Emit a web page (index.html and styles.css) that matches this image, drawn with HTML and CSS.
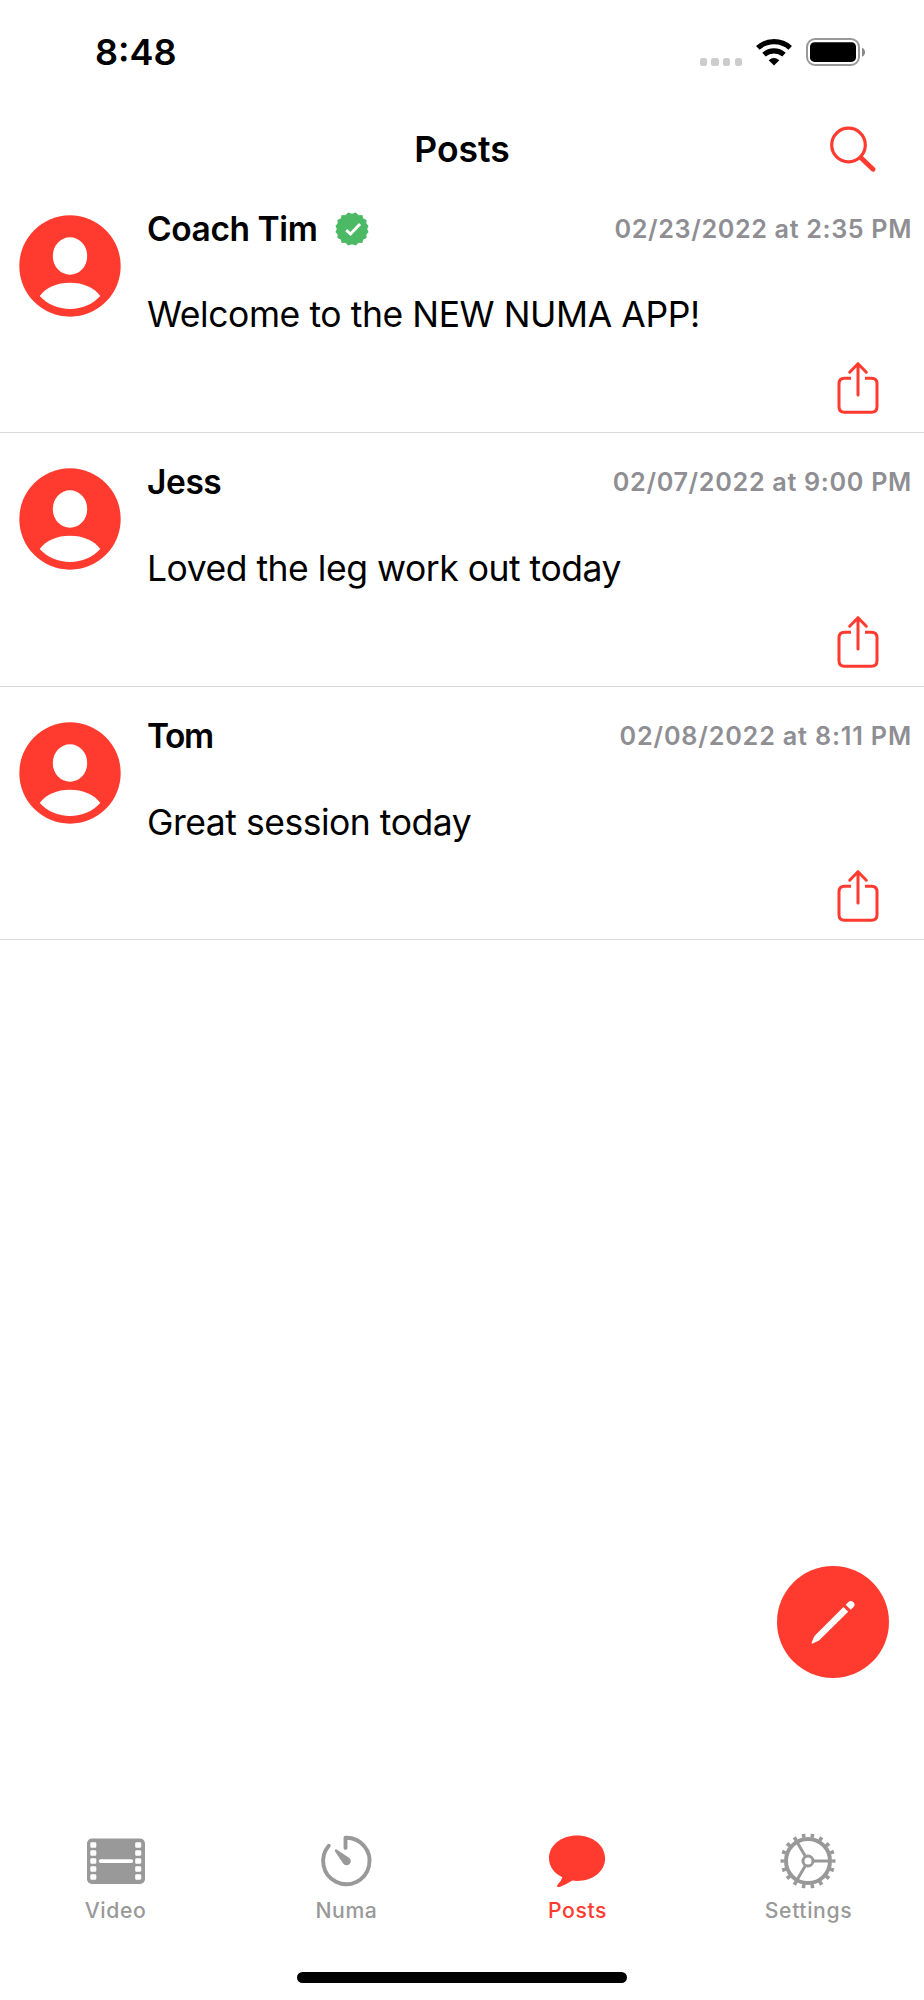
FILE: index.html
```html
<!DOCTYPE html>
<html lang="en">
<head>
<meta charset="utf-8">
<title>Posts</title>
<link rel="stylesheet" href="styles.css">
</head>
<body>
<svg class="sprite" aria-hidden="true">
  <symbol id="person" viewBox="0 0 102 102">
    <circle cx="51" cy="51" r="50.7" fill="#ff3b30"/>
    <ellipse cx="51" cy="41" rx="17.2" ry="18.8" fill="#fff"/>
    <path d="M20.7 81C27 72.500 38 67.800 51 67.800S75 72.500 81.300 81C74 89 63 94 51 94S28 89 20.700 81Z" fill="#fff"/>
  </symbol>
  <symbol id="share" viewBox="0 0 42 54">
    <g fill="none" stroke="#ff3b30" stroke-width="3" stroke-linecap="round" stroke-linejoin="round">
      <path d="M14 17.200H7.500Q2 17.200 2 22.700V45.800Q2 51.300 7.500 51.300H34.500Q40 51.300 40 45.800V22.700Q40 17.200 34.500 17.200H28" stroke-linecap="butt"/>
      <path d="M21 34V3M12.700 11.200L21 2.700L29.300 11.200"/>
    </g>
  </symbol>
</svg>
<div class="screen">
  <header class="status">
    <span class="clock">8:48</span>
    <div class="indicators">
      <div class="dots"><i></i><i></i><i></i><i></i></div>
      <svg class="wifi" width="36" height="27" viewBox="0 0 36 27">
        <g fill="none" stroke="#000" stroke-width="5.200">
          <path d="M1.800 8.900Q8.500 2.700 18 2.700T34.200 8.900"/>
          <path d="M8 15.600Q12.400 11.800 18 11.800T28 15.600"/>
        </g>
        <path d="M12.700 21.300Q18 16.800 23.300 21.300L18 26.500Z"/>
      </svg>
      <svg class="battery" width="60" height="28" viewBox="0 0 60 28">
        <rect x="1" y="1" width="52" height="26" rx="8" fill="none" stroke="#999" stroke-width="2"/>
        <rect x="4" y="4.300" width="46" height="19.600" rx="4.500"/>
        <path d="M56 9.700Q59 11 59 14.200T56 18.700Z" fill="#888"/>
      </svg>
    </div>
  </header>
  <nav class="navbar">
    <h1 class="title">Posts</h1>
    <svg class="search" width="48" height="48" viewBox="0 0 48 48">
      <g fill="none" stroke="#ff3b30" stroke-linecap="round">
        <circle cx="20.500" cy="20" r="16.800" stroke-width="3.200"/>
        <path d="M33.200 33L45 44.300" stroke-width="4.800"/>
      </g>
    </svg>
  </nav>
  <main class="posts">
    <article class="post">
      <svg class="avatar"><use href="#person"/></svg>
      <div class="content">
        <div class="head">
          <span class="name">Coach Tim</span>
          <svg class="badge" width="34" height="34" viewBox="-17 -17 34 34">
            <path fill="#4cba64" d="M0-15.200L3.800-16.400 6.600-13.800 10.300-13.900 11.300-10.600 14.600-9 14.300-5.700 16.500-3.100 15.200 0 16.500 3.100 14.300 5.700 14.600 9 11.300 10.600 10.300 13.900 6.600 13.800 3.800 16.400 0 15.200-3.800 16.400-6.600 13.800-10.300 13.900-11.300 10.600-14.600 9-14.300 5.700-16.500 3.100-15.200 0-16.500-3.100-14.300-5.700-14.600-9-11.300-10.600-10.300-13.900-6.600-13.800-3.800-16.400Z"/>
            <path d="M-5.800 1.200L-1.500 5L8-5" fill="none" stroke="#fff" stroke-width="3"/>
          </svg>
          <time class="date">02/23/2022 at 2:35 PM</time>
        </div>
        <p class="body wide">Welcome to the NEW NUMA APP!</p>
        <svg class="share"><use href="#share"/></svg>
      </div>
    </article>
    <article class="post">
      <svg class="avatar"><use href="#person"/></svg>
      <div class="content">
        <div class="head">
          <span class="name">Jess</span>
          <time class="date loose">02/07/2022 at 9:00 PM</time>
        </div>
        <p class="body">Loved the leg work out today</p>
        <svg class="share"><use href="#share"/></svg>
      </div>
    </article>
    <article class="post">
      <svg class="avatar"><use href="#person"/></svg>
      <div class="content">
        <div class="head">
          <span class="name tight">Tom</span>
          <time class="date looser">02/08/2022 at 8:11 PM</time>
        </div>
        <p class="body">Great session today</p>
        <svg class="share"><use href="#share"/></svg>
      </div>
    </article>
  </main>
  <button class="compose" aria-label="New post">
    <svg width="112" height="112" viewBox="0 0 112 112" fill="#fff">
      <path d="M66.500 41L71.200 45.700L42.500 74Q41.500 75 39.500 75.800L35.600 77.600Q34.200 78 34.700 76.600L36.300 72.500Q37 70.500 38.200 69.300Z"/>
      <path d="M68.700 38.800L71.200 36.300Q73.600 34 76.200 36Q78.900 38.600 76.300 41.200L73.700 43.700Z"/>
    </svg>
  </button>
  <footer class="tabbar">
    <a class="tab">
      <svg class="icon" width="58" height="56" viewBox="0.500 0 58 56">
        <rect x="0.500" y="5.500" width="58" height="45.500" rx="5" fill="#999"/>
        <g fill="#fff">
          <rect x="3.800" y="9.200" width="6" height="5.500" rx="1.300"/><rect x="3.800" y="17.200" width="6" height="5.500" rx="1.300"/><rect x="3.800" y="25.200" width="6" height="5.500" rx="1.300"/><rect x="3.800" y="33.200" width="6" height="5.500" rx="1.300"/><rect x="3.800" y="41.200" width="6" height="5.500" rx="1.300"/>
          <rect x="48.700" y="9.200" width="6" height="5.500" rx="1.300"/><rect x="48.700" y="17.200" width="6" height="5.500" rx="1.300"/><rect x="48.700" y="25.200" width="6" height="5.500" rx="1.300"/><rect x="48.700" y="33.200" width="6" height="5.500" rx="1.300"/><rect x="48.700" y="41.200" width="6" height="5.500" rx="1.300"/>
          <rect x="12.300" y="26.200" width="34.300" height="3.700" rx="1.850"/>
        </g>
      </svg>
      <span class="label">Video</span>
    </a>
    <a class="tab">
      <svg class="icon" width="58" height="56" viewBox="1 -0.600 58 56">
        <path d="M28.500 14.300V4.200A23.200 23.200 0 1 1 11.800 12.200" fill="none" stroke="#999" stroke-width="3.900" stroke-linecap="round" stroke-linejoin="round"/>
        <path d="M19.600 15.800Q17.600 15.400 17.700 17.400L26.400 30.200Q29.500 33.200 32.700 30.300Q35.200 26.800 32 24.200Z" fill="#999"/>
      </svg>
      <span class="label">Numa</span>
    </a>
    <a class="tab active">
      <svg class="icon" width="58" height="56" viewBox="1 -0.500 58 56">
        <path d="M29 2C45 2 57.100 12 57.100 24.800C57.100 37.600 45.300 47.500 29 47.500Q26.500 47.500 24.500 47.100Q17.800 51.200 12.300 53.200C9.500 54.200 8 53.200 9.800 51.100Q13.300 47.300 14.300 43.800C6 39.800 1 33 1 24.800C1 12 13 2 29 2Z" fill="#ff3b30"/>
      </svg>
      <span class="label">Posts</span>
    </a>
    <a class="tab">
      <svg class="icon" width="58" height="56" viewBox="0 -0.300 58 56">
        <g fill="none" stroke="#999" transform="translate(28 27.700)">
          <circle r="22" stroke-width="4"/>
          <circle r="25.500" stroke-width="4" pathLength="180" stroke-dasharray="4 6" stroke-dashoffset="2"/>
          <circle r="5" stroke-width="3"/>
          <path d="M6 0H22M-3 -5.200L-11 -19M-3 5.200L-11 19" stroke-width="3"/>
        </g>
      </svg>
      <span class="label">Settings</span>
    </a>
  </footer>
  <div class="home"></div>
</div>
</body>
</html>
```
FILE: styles.css
```css
* { box-sizing: border-box; }
body { margin: 0; background: #fff; color: #000; font-family: Inter, "Liberation Sans", sans-serif; }
.sprite { display: none; }
.screen { position: relative; width: 924px; height: 2000px; display: flex; flex-direction: column; overflow: hidden; }
.status { height: 105px; padding: 32px 58.500px 0 95px; display: flex; justify-content: space-between; align-items: flex-start; }
.clock { font-size: 36px; line-height: 41px; font-weight: 600; }
.indicators { display: flex; padding-top: 6px; }
.dots { display: flex; gap: 4.500px; padding-top: 20px; }
.dots i { width: 7.200px; height: 7.500px; border-radius: 2.500px; background: #ccc; }
.wifi { margin: 1px 14px 0 13.500px; }
.navbar { height: 74.300px; padding-left: 48px; display: flex; align-items: flex-start; }
.title { flex: 1; margin: 25px 0 0 0; padding-left: 48px; text-align: center; font-size: 35.500px; line-height: 40px; font-weight: 600; letter-spacing: 0; }
.search { margin: 20px 48px 0 0; }
.post { height: 253.650px; display: flex; padding: 29.500px 12px 0 19px; border-bottom: 1.500px solid #dadadc; }
.avatar { flex: none; width: 102px; height: 102px; margin-top: 5.800px; }
.content { flex: 1; display: flex; flex-direction: column; padding-left: 26px; }
.head { display: flex; align-items: center; height: 40px; }
.name { font-size: 33.500px; line-height: 40px; font-weight: 600; letter-spacing: -0.420px; }
.tight { letter-spacing: -1.500px; }
.badge { margin-left: 17.500px; }
.date { margin-left: auto; font-size: 25.200px; line-height: 40px; font-weight: 600; color: #8e8e93; letter-spacing: 0.630px; white-space: nowrap; }
.loose { letter-spacing: 0.680px; }
.looser { letter-spacing: 0.820px; }
.body { margin: 46.500px 0 0; font-size: 35.500px; line-height: 40px; white-space: nowrap; letter-spacing: -0.480px; }
.wide { letter-spacing: -0.420px; }
.share { align-self: flex-end; width: 42px; height: 54px; margin: 26px 33px 0 0; }
.compose { position: absolute; left: 777px; top: 1566px; width: 112px; height: 112px; padding: 0; border: 0; border-radius: 50%; background: #ff3b30; }
.compose svg { display: block; }
.tabbar { margin-top: auto; height: 139px; display: grid; grid-template-columns: repeat(4, 1fr); }
.tab { display: flex; flex-direction: column; align-items: center; color: #999; }
.icon { flex: none; }
.label { margin-top: 6px; font-size: 21.200px; line-height: 30px; font-weight: 500; letter-spacing: 0.600px; }
.active { color: #ff3b30; }
.home { flex: none; width: 330px; height: 11px; margin: 0 0 17.500px 297px; border-radius: 6px; background: #000; }
```
